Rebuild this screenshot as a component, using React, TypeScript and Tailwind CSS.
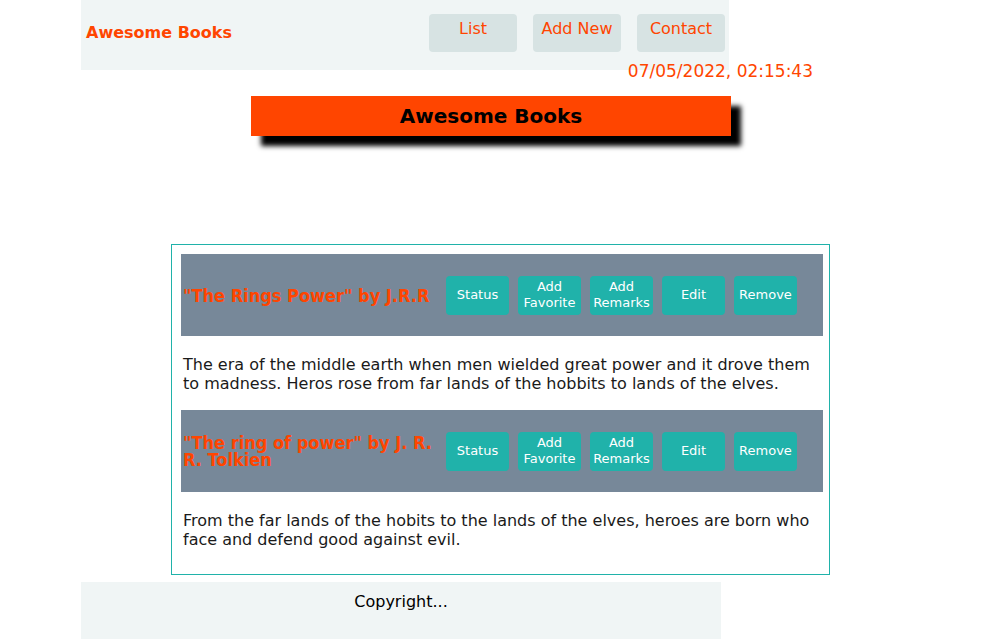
const books = [
  {
    title: '"The Rings Power" by J.R.R',
    text: "The era of the middle earth when men wielded great power and it drove them to madness. Heros rose from far lands of the hobbits to lands of the elves.",
  },
  {
    title: '"The ring of power" by J. R. R. Tolkien',
    text: "From the far lands of the hobits to the lands of the elves, heroes are born who face and defend good against evil.",
  },
];

const actions = [["Status"], ["Add", "Favorite"], ["Add", "Remarks"], ["Edit"], ["Remove"]];

function BookRow({ title, text }: { title: string; text: string }) {
  return (
    <div>
      <div className="flex h-[82px] w-[642px] items-center bg-[#778899]">
        <h3 className="ml-[2px] w-[255px] font-['DejaVu_Sans_Condensed',sans-serif] text-[18px] font-bold leading-[17px] text-[#ff4500]">
          {title}
        </h3>
        <div className="ml-[8px] flex gap-[9px]">
          {actions.map((lines) => (
            <button
              key={lines.join(" ")}
              type="button"
              className="flex h-[39px] w-[63px] flex-col items-center justify-center rounded-[4px] bg-[#20b2aa] text-[13px] leading-[16px] text-white"
            >
              {lines.map((l) => (
                <span key={l}>{l}</span>
              ))}
            </button>
          ))}
        </div>
      </div>
      <p className="pb-[17px] pl-[2px] pr-[10px] pt-[20px] text-[16px] leading-[18.6px] text-[#1a1a1a]">{text}</p>
    </div>
  );
}

export default function App() {
  return (
    <div className="min-h-screen bg-white font-['DejaVu_Sans',Verdana,sans-serif]">
      <header className="ml-[81px] flex h-[70px] w-[648px] items-start justify-between bg-[#f0f5f5]">
        <h1 className="mt-[21px] pl-[5px] text-[16px] font-bold text-[#ff4500]">Awesome Books</h1>
        <nav className="mr-[4px] mt-[14px] flex gap-[16px]">
          {["List", "Add New", "Contact"].map((item) => (
            <a
              key={item}
              href="#"
              className="flex h-[38px] w-[88px] justify-center rounded-[4px] bg-[#d7e3e3] pt-[3px] text-[16px] text-[#ff4500]"
            >
              {item}
            </a>
          ))}
        </nav>
      </header>

      <div className="-mt-[9px] w-[813px] text-right text-[17px] leading-[20px] text-[#ff4500]">07/05/2022, 02:15:43</div>

      <div className="ml-[251px] mt-[15px] flex h-[40px] w-[480px] items-center justify-center bg-[#ff4500] shadow-[10px_10px_5px_#000]">
        <h2 className="text-[20px] font-bold text-black">Awesome Books</h2>
      </div>

      <section className="ml-[171px] mt-[108px] w-[659px] border border-[#20b2aa] px-[9px] pb-[8px] pt-[9px]">
        {books.map((b) => (
          <BookRow key={b.title} title={b.title} text={b.text} />
        ))}
      </section>

      <footer className="ml-[81px] mt-[7px] h-[70px] w-[640px] bg-[#f0f5f5] pt-[8px] text-center text-[16px] text-black">
        Copyright...
      </footer>
    </div>
  );
}
